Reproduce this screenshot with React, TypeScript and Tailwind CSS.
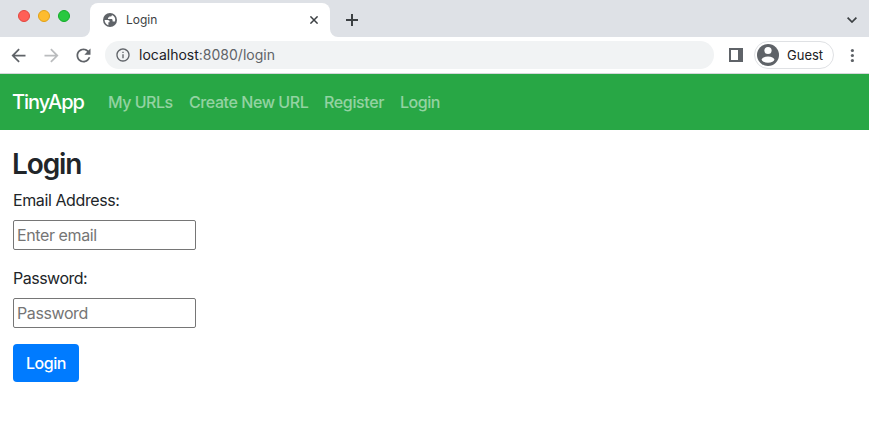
import React from "react";

const material = {
  back: "M20 11H7.83l5.59-5.59L12 4l-8 8 8 8 1.41-1.41L7.83 13H20v-2z",
  forward: "M12 4l-1.41 1.41L16.17 11H4v2h12.17l-5.58 5.59L12 20l8-8z",
  reload:
    "M17.65 6.35C16.2 4.9 14.21 4 12 4c-4.42 0-7.99 3.58-7.99 8s3.57 8 7.99 8c3.73 0 6.84-2.55 7.73-6h-2.08c-.82 2.33-3.04 4-5.65 4-3.31 0-6-2.69-6-6s2.69-6 6-6c1.66 0 3.14.69 4.22 1.78L13 11h7V4l-2.35 2.35z",
  info: "M11 7h2v2h-2zm0 4h2v6h-2zm1-9C6.48 2 2 6.48 2 12s4.48 10 10 10 10-4.48 10-10S17.52 2 12 2zm0 18c-4.41 0-8-3.59-8-8s3.59-8 8-8 8 3.59 8 8-3.59 8-8 8z",
};

function Glyph({ d, className }: { d: string; className: string }) {
  return (
    <svg viewBox="0 0 24 24" fill="currentColor" className={`shrink-0 ${className}`}>
      <path d={d} />
    </svg>
  );
}

function TabStrip() {
  return (
    <div className="flex h-[37px] bg-[#dee1e6] text-[#3c4043]">
      <div className="flex w-[82px] gap-2 pt-[10px] pl-[18px]">
        <span className="size-3 rounded-full border border-[#e2463f] bg-[#ff5f57]" />
        <span className="size-3 rounded-full border border-[#e1a116] bg-[#febc2e]" />
        <span className="size-3 rounded-full border border-[#12ac28] bg-[#28c840]" />
      </div>
      <svg viewBox="0 0 8 8" className="size-2 self-end" fill="#fff">
        <path d="M8 0v8H0a8 8 0 0 0 8-8z" />
      </svg>
      <div className="mt-[3px] flex w-60 items-center rounded-t-lg bg-white pl-[13px]">
        <svg viewBox="0 0 14 14" className="size-[14px] shrink-0">
          <circle cx="7" cy="7" r="7" fill="#5f6368" />
          <path
            d="M1.6 7.1H4.6C6 7.1 6.8 8 6.6 9.2H5.4V12.2C3.2 11.6 1.6 9.6 1.6 7.1zM8.9 1.9C8.9 3 8.2 3.6 7.2 3.6H6.2V4.6H5V6H8.4C9.3 6 9.6 6.7 9.6 7.4V8.4H11.9C13 5.4 11.4 2.8 8.9 1.9z"
            fill="#fff"
          />
        </svg>
        <span className="ml-[9px] flex-1 text-[12px]">Login</span>
        <svg viewBox="0 0 8 8" className="mr-3 size-2" stroke="currentColor" strokeWidth="1.5">
          <path d="M.4.4l7.2 7.2M7.6.4.4 7.6" />
        </svg>
      </div>
      <svg viewBox="0 0 8 8" className="size-2 self-end" fill="#fff">
        <path d="M0 0v8h8a8 8 0 0 1-8-8z" />
      </svg>
      <svg viewBox="0 0 12 12" className="mt-[14px] ml-2 size-3" stroke="currentColor" strokeWidth="2">
        <path d="M6 0v12M0 6h12" />
      </svg>
      <svg viewBox="0 0 10 6" className="mt-[17px] mr-3 ml-auto h-[6px] w-[10px]" fill="none" stroke="currentColor" strokeWidth="1.7">
        <path d="M.6.7 5 5 9.4.7" />
      </svg>
    </div>
  );
}

function Toolbar() {
  return (
    <div className="flex h-[37px] items-center border-b border-[#d5d7da] bg-white text-[#5f6368]">
      <Glyph d={material.back} className="ml-[8px] size-[21px]" />
      <Glyph d={material.forward} className="ml-[12px] size-[21px] text-[#babcbe]" />
      <Glyph d={material.reload} className="ml-[11px] size-[21px]" />
      <div className="ml-[11px] flex h-7 w-[609px] items-center rounded-full bg-[#f1f3f4] pl-[10px]">
        <Glyph d={material.info} className="size-4" />
        <span className="ml-2 pb-[2px] text-[14px]">
          <span className="text-[#202124]">localhost</span>:8080/login
        </span>
      </div>
      <svg viewBox="0 0 14 14" className="ml-[15px] size-[14px] shrink-0" fill="currentColor" fillRule="evenodd">
        <path d="M0 0h14v14H0zM2 2v10h7V2z" />
      </svg>
      <div className="ml-[11px] flex h-7 w-20 items-center rounded-full border border-[#dfe1e4] pl-[2px]">
        <svg viewBox="0 0 22 22" className="size-[22px] shrink-0">
          <circle cx="11" cy="11" r="11" fill="#5f6368" />
          <circle cx="11" cy="6.5" r="3.6" fill="#fff" />
          <ellipse cx="11" cy="15.6" rx="6.3" ry="3.1" fill="#fff" />
        </svg>
        <span className="ml-2 pt-[2px] text-[13px] text-[#202124]">Guest</span>
      </div>
      <svg viewBox="0 0 4 14" className="ml-[16px] h-[14px] w-1" fill="currentColor">
        <circle cx="2.4" cy="2.5" r="1.6" />
        <circle cx="2.4" cy="7.5" r="1.6" />
        <circle cx="2.4" cy="12.5" r="1.6" />
      </svg>
    </div>
  );
}

function NavBar() {
  return (
    <nav className="flex h-14 items-center bg-[#28a745] pl-3 text-base whitespace-nowrap text-white/50">
      <a className="w-24 text-[20px] tracking-[-1px] text-white [font-weight:450]">TinyApp</a>
      <a className="w-[81px] tracking-[-0.5px] [font-weight:450]">My URLs</a>
      <a className="w-[135px] tracking-[-0.42px] [font-weight:450]">Create New URL</a>
      <a className="w-[76px] tracking-[-0.35px] [font-weight:450]">Register</a>
      <a className="tracking-[-0.45px] [font-weight:450]">Login</a>
    </nav>
  );
}

const inputClass =
  "block h-[30px] w-[183px] rounded-[2px] border border-[#767676] bg-white px-[3px] text-base tracking-[-0.4px] outline-none placeholder:text-[#757575] placeholder:opacity-100";

export default function App() {
  return (
    <div className="h-[423px] overflow-hidden bg-white font-['Inter','Liberation_Sans',sans-serif]">
      <TabStrip />
      <Toolbar />
      <NavBar />
      <main className="pt-4 pl-[13px] text-base leading-6 text-[#212529]">
        <h1 className="mb-[7px] -ml-px pt-px text-[28px] leading-[34px] tracking-[-1.1px] [font-weight:600]">Login</h1>
        <label className="mb-2 block tracking-[-0.4px]">Email Address:</label>
        <input type="email" placeholder="Enter email" className={inputClass} />
        <label className="mt-4 mb-2 block tracking-[-0.5px]">Password:</label>
        <input type="password" placeholder="Password" className={inputClass} />
        <button className="mt-4 h-[38px] w-[66px] rounded bg-[#007bff] tracking-[-0.45px] text-white [font-weight:450]">Login</button>
      </main>
    </div>
  );
}
